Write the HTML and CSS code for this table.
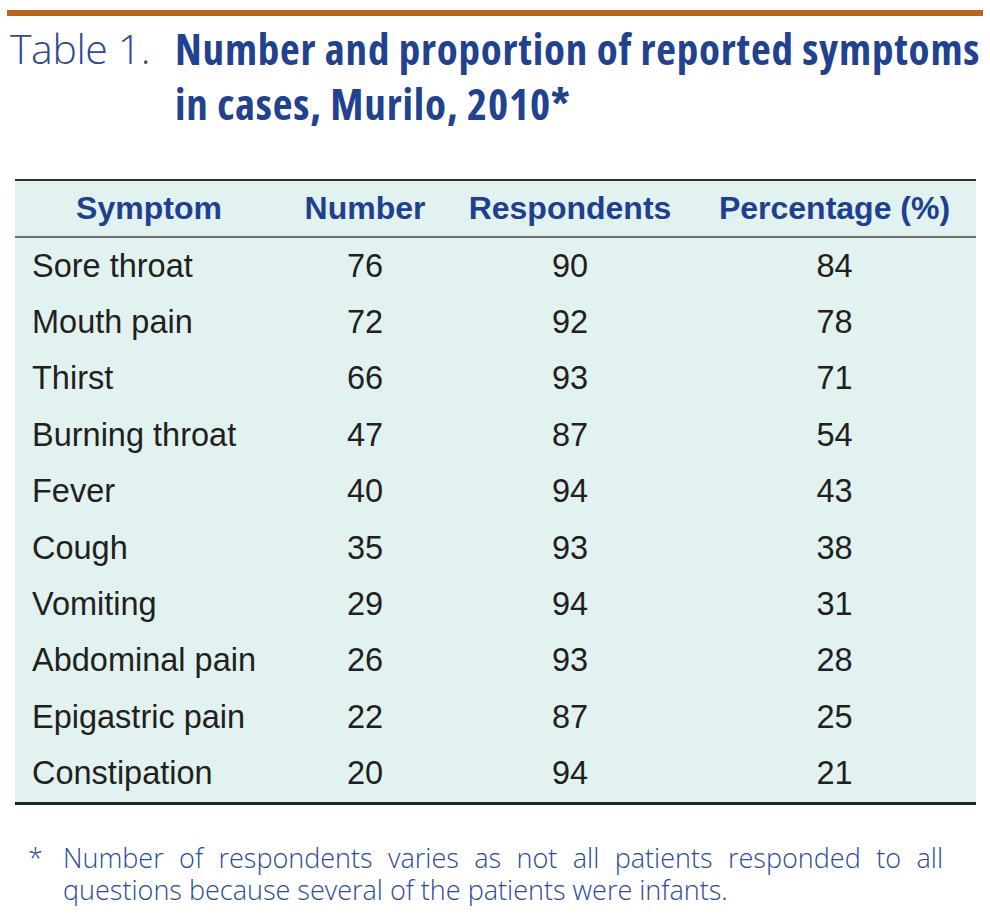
FILE: index.html
```html
<!DOCTYPE html>
<html lang="en">
<head>
<meta charset="utf-8">
<title>Table 1. Number and proportion of reported symptoms in cases, Murilo, 2010</title>
<link rel="stylesheet" href="styles.css">
</head>
<body>
<div class="page">
  <div class="rule"></div>
  <div class="caption">
    <div class="caption-label">Table 1.</div>
    <h1 class="caption-title">Number and proportion of reported symptoms in cases, Murilo, 2010*</h1>
  </div>
  <table class="data">
    <colgroup>
      <col class="c1"><col class="c2"><col class="c3"><col class="c4">
    </colgroup>
    <thead>
      <tr><th>Symptom</th><th>Number</th><th>Respondents</th><th>Percentage (%)</th></tr>
    </thead>
    <tbody>
      <tr><td>Sore throat</td><td>76</td><td>90</td><td>84</td></tr>
      <tr><td>Mouth pain</td><td>72</td><td>92</td><td>78</td></tr>
      <tr><td>Thirst</td><td>66</td><td>93</td><td>71</td></tr>
      <tr><td>Burning throat</td><td>47</td><td>87</td><td>54</td></tr>
      <tr><td>Fever</td><td>40</td><td>94</td><td>43</td></tr>
      <tr><td>Cough</td><td>35</td><td>93</td><td>38</td></tr>
      <tr><td>Vomiting</td><td>29</td><td>94</td><td>31</td></tr>
      <tr><td>Abdominal pain</td><td>26</td><td>93</td><td>28</td></tr>
      <tr><td>Epigastric pain</td><td>22</td><td>87</td><td>25</td></tr>
      <tr><td>Constipation</td><td>20</td><td>94</td><td>21</td></tr>
    </tbody>
  </table>
  <div class="footnote">
    <span class="fn-mark">*</span>
    <p class="fn-text"><span class="fn-line1">Number of respondents varies as not all patients responded to all</span><span class="fn-line2">questions because several of the patients were infants.</span></p>
  </div>
</div>
</body>
</html>
```
FILE: styles.css
```css
html, body {
  margin: 0;
  padding: 0;
  background: #ffffff;
}

.page {
  width: 990px;
  padding-top: 10px;
}

.rule {
  height: 6px;
  margin: 0 7px 0 7px;
  background: #b9651d;
}

.caption {
  display: flex;
  margin-top: 5px;
  padding-left: 10px;
  font-family: "Open Sans", "DejaVu Sans Condensed", "Liberation Sans", sans-serif;
  font-size: 41px;
  line-height: 55px;
  color: #22418f;
}

.caption-label {
  width: 165px;
  flex: none;
  font-weight: 300;
  letter-spacing: -0.4px;
  color: #2c4896;
}

.caption-title {
  margin: 0;
  width: 812px;
  flex: none;
  font-size: 43px;
  font-weight: bold;
  font-stretch: 75%;
  letter-spacing: 0.8px;
  line-height: 55px;
}

.data {
  margin: 48px 0 0 15px;
  width: 961px;
  border-collapse: collapse;
  background: #e1f2f1;
  font-family: "Liberation Sans", Arial, sans-serif;
  border-top: 2px solid #2f2f2f;
  border-bottom: 3px solid #232323;
}

.c1 { width: 268px; }
.c2 { width: 164px; }
.c3 { width: 246px; }
.c4 { width: 283px; }

.data th {
  height: 55px;
  padding: 0;
  font-size: 32px;
  font-weight: bold;
  color: #213f8f;
  text-align: center;
  vertical-align: middle;
  border-bottom: 2px solid #6e6e6e;
}

.data td {
  height: 56.4px;
  padding: 0;
  font-size: 32.5px;
  color: #231f20;
  text-align: center;
  vertical-align: middle;
}

.data td:first-child {
  text-align: left;
  padding-left: 17px;
}

.footnote {
  display: flex;
  margin-top: 37px;
  font-family: "Open Sans", "DejaVu Sans Condensed", "Liberation Sans", sans-serif;
  font-weight: 300;
  font-size: 27px;
  line-height: 32px;
  color: #2a4a9c;
}

.fn-mark {
  width: 35px;
  padding-left: 28px;
  flex: none;
}

.fn-text {
  margin: 0;
  width: 880px;
}

.fn-line1 {
  display: block;
  text-align: justify;
  text-align-last: justify;
}

.fn-line2 {
  display: block;
}
```
